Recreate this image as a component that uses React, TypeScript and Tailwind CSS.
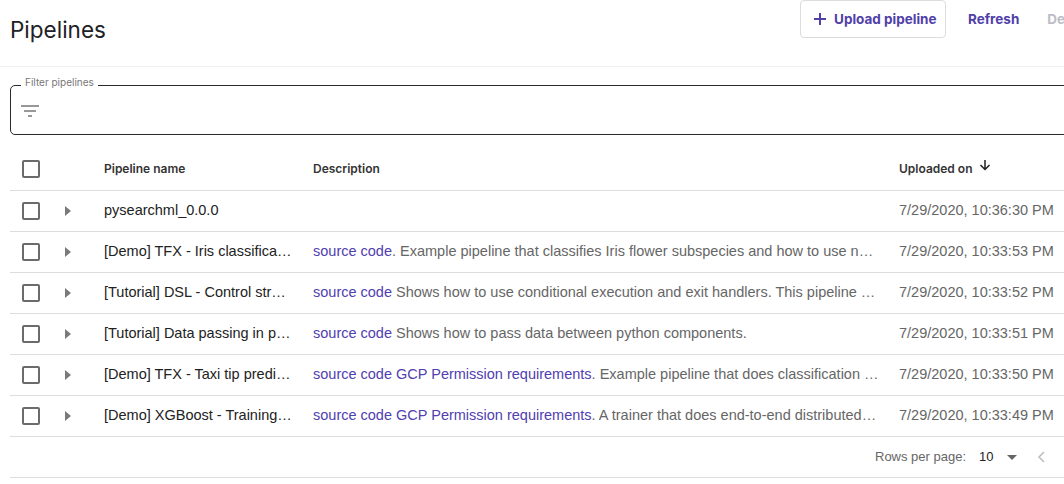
import React from 'react'

const rows = [
  { name: 'pysearchml_0.0.0', links: [] as string[], desc: '', date: '7/29/2020, 10:36:30 PM' },
  {
    name: '[Demo] TFX - Iris classification pipeline',
    links: ['source code'],
    desc: '. Example pipeline that classifies Iris flower subspecies and how to use native Keras within TFX.',
    date: '7/29/2020, 10:33:53 PM',
  },
  {
    name: '[Tutorial] DSL - Control structures',
    links: ['source code'],
    desc: ' Shows how to use conditional execution and exit handlers. This pipeline will randomly fail to demonstrate that the exit handler gets executed even in case of failure.',
    date: '7/29/2020, 10:33:52 PM',
  },
  {
    name: '[Tutorial] Data passing in python components',
    links: ['source code'],
    desc: ' Shows how to pass data between python components.',
    date: '7/29/2020, 10:33:51 PM',
  },
  {
    name: '[Demo] TFX - Taxi tip prediction model trainer',
    links: ['source code', 'GCP Permission requirements'],
    desc: '. Example pipeline that does classification with model analysis based on a public tax cab BigQuery dataset.',
    date: '7/29/2020, 10:33:50 PM',
  },
  {
    name: '[Demo] XGBoost - Training with confusion matrix',
    links: ['source code', 'GCP Permission requirements'],
    desc: '. A trainer that does end-to-end distributed training for XGBoost models.',
    date: '7/29/2020, 10:33:49 PM',
  },
]

function Checkbox() {
  return <div className="w-[18px] h-[18px] rounded-[2px] border-2 border-[#6b6b6b]" />
}

function Caret() {
  return (
    <svg width="6" height="10" viewBox="0 0 6 10">
      <path d="M0 0 L6 5 L0 10 Z" fill="#7a7a7a" />
    </svg>
  )
}

export default function App() {
  return (
    <div className="w-[1064px] h-[484px] overflow-hidden bg-white">
      <div className="w-[1120px]">
        {/* toolbar */}
        <div className="flex items-start h-[67px] border-b border-[#efefef]">
          <div className="w-[800px] pl-[10px] pt-[13px] text-[22.5px] text-[#202124] font-['Inter',sans-serif]">
            Pipelines
          </div>
          <div className="flex items-center font-['Inter',sans-serif] text-[13.5px] font-bold">
            <button className="flex items-center gap-[7px] h-[38px] w-[146px] pl-[12px] rounded-[4px] border border-[#dcdcdc] text-[#5040a8]">
              <svg width="14" height="14" viewBox="0 0 14 14">
                <path d="M7 1 V13 M1 7 H13" stroke="#5040a8" strokeWidth="2" />
              </svg>
              Upload pipeline
            </button>
            <span className="ml-[22px] text-[#5040a8]">Refresh</span>
            <span className="ml-[28px] text-[#bdbdc6]">Delete</span>
          </div>
        </div>

        {/* filter */}
        <div className="ml-[10px] mt-[18px] relative h-[50px] rounded-[5px] border border-[#2a2a2a] flex items-center">
          <span className="absolute -top-[11px] left-[10px] px-[4px] bg-white text-[10px] text-[#777] font-['Inter',sans-serif] leading-[14px]">
            Filter pipelines
          </span>
          <svg className="ml-[10px] mt-[1px]" width="18" height="14" viewBox="0 0 18 14">
            <path d="M0 2 H18 M3 7 H15 M7 12 H11" stroke="#777" strokeWidth="1.6" />
          </svg>
        </div>

        {/* table */}
        <div className="ml-[10px] mt-[12px] font-['Liberation_Sans',Arial,sans-serif]">
          <div className="flex items-center h-[44px] border-b border-[#dddddd] text-[12px] font-semibold text-[#333] font-['Inter',sans-serif]">
            <div className="w-[46px] pl-[12px] pt-[1px]">
              <Checkbox />
            </div>
            <div className="w-[48px]" />
            <div className="w-[209px]">Pipeline name</div>
            <div className="w-[586px]">Description</div>
            <div className="flex items-center gap-[6px]">
              Uploaded on
              <svg width="12" height="12" viewBox="0 0 12 12" className="-mt-[7px]">
                <path d="M6 1 V10.5 M1.5 6 L6 10.5 L10.5 6" stroke="#222" strokeWidth="1.5" fill="none" />
              </svg>
            </div>
          </div>
          {rows.map((r) => (
            <div key={r.date} className="flex items-center h-[41px] border-b border-[#dddddd] text-[14.5px]">
              <div className="w-[46px] pl-[12px]">
                <Checkbox />
              </div>
              <div className="w-[48px] pl-[9px] flex items-center">
                <Caret />
              </div>
              <div className="w-[209px] pr-[20px] truncate text-[#222]">{r.name}</div>
              <div className="w-[586px] pr-[20px] truncate text-[#666]">
                {r.links.map((l, i) => (
                  <span key={l}>
                    {i > 0 && ' '}
                    <span className="text-[#5040b0]">{l}</span>
                  </span>
                ))}
                {r.desc}
              </div>
              <div className="text-[#666]">{r.date}</div>
            </div>
          ))}
          <div className="flex items-center h-[41px] border-b border-[#dddddd] text-[13px] text-[#666]">
            <div className="w-[865px]" />
            <span>Rows per page:</span>
            <span className="ml-[13px] text-[#222]">10</span>
            <svg className="ml-[13px]" width="10" height="5" viewBox="0 0 10 5">
              <path d="M0 0 L10 0 L5 5 Z" fill="#666" />
            </svg>
            <svg className="ml-[20px]" width="8" height="12" viewBox="0 0 8 12">
              <path d="M7 1 L2 6 L7 11" stroke="#bbb" strokeWidth="1.5" fill="none" />
            </svg>
          </div>
        </div>
      </div>
    </div>
  )
}
